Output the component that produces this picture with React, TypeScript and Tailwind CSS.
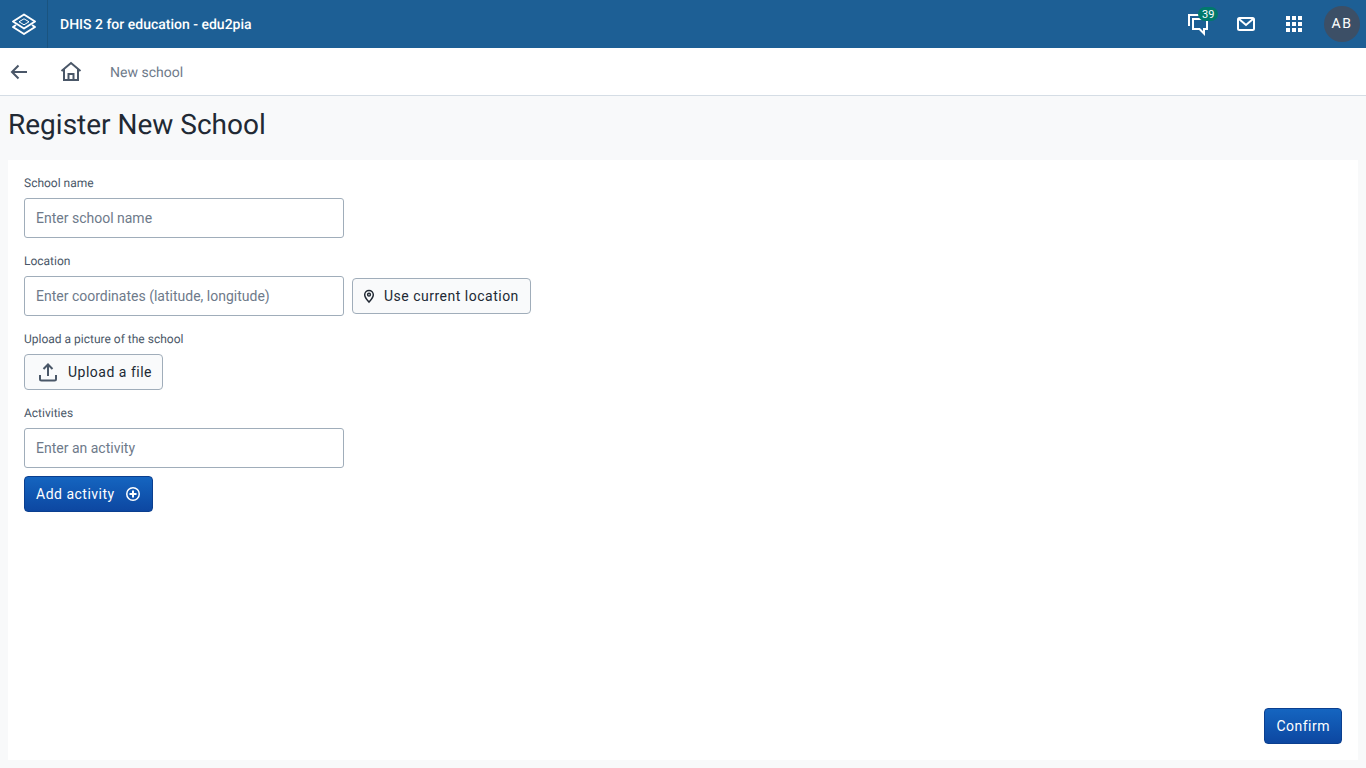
const labelClass = "block h-[14px] mb-2 text-xs leading-[14px] text-[#4a5768]";
const inputClass =
  "block w-[320px] h-10 px-[11px] rounded-[3px] border border-[#a0adba] bg-white text-sm text-[#212934] placeholder:text-[#6e7a8a] outline-none";
const secondaryClass =
  "flex items-center h-9 rounded-[4px] border border-[#a0adba] bg-[#f9fafb] text-sm font-normal tracking-[0.5px] text-[#212934]";
const primaryClass =
  "flex items-center h-9 rounded-[4px] border border-[#0b3f8f] bg-gradient-to-b from-[#1565c0] to-[#0d47a1] text-sm font-normal tracking-[0.5px] text-white";

function Logo() {
  return (
    <svg width="26" height="24" viewBox="0 0 26 24" fill="none" stroke="white" strokeWidth="2" strokeLinejoin="round">
      <path d="M13 2.5 L24 9.5 L13 16.5 L2 9.5 Z" />
      <path d="M13 6.8 L18 9.8 L13 12.8 L8 9.8 Z" strokeWidth="1" />
      <path d="M5 13 L2 15 L13 22 L24 15 L21 13" />
    </svg>
  );
}

function Messages() {
  return (
    <svg width="24" height="24" viewBox="0 0 24 24" fill="none" stroke="white" strokeWidth="2">
      <path d="M4 13 H3 V3 H16 V6" />
      <path d="M7 7 H21 V17 H18 V21.5 L13.5 17 H7 Z" />
    </svg>
  );
}

function Mail() {
  return (
    <svg width="24" height="24" viewBox="0 0 24 24" fill="none" stroke="white" strokeWidth="2">
      <rect x="4" y="6" width="16" height="12" rx="1.5" />
      <path d="M5 7 L12 13 L19 7" />
    </svg>
  );
}

function Apps() {
  const cells = [0, 1, 2, 3, 4, 5, 6, 7, 8];
  return (
    <svg width="24" height="24" viewBox="0 0 24 24" fill="white">
      {cells.map((i) => (
        <rect key={i} x={4 + (i % 3) * 6} y={4 + Math.floor(i / 3) * 6} width="4" height="4" />
      ))}
    </svg>
  );
}

function BackArrow() {
  return (
    <svg width="24" height="24" viewBox="0 0 24 24" fill="none" stroke="#4a5768" strokeWidth="2">
      <path d="M20 12 H5" />
      <path d="M11.5 5.5 L5 12 L11.5 18.5" />
    </svg>
  );
}

function Home() {
  return (
    <svg width="24" height="24" viewBox="0 0 24 24" fill="none" stroke="#4a5768" strokeWidth="2">
      <path d="M2.5 11 L12 3 L21.5 11" />
      <path d="M5 9 V20 H19 V9" />
      <path d="M9.5 20 V14 H14.5 V20" />
    </svg>
  );
}

function Pin() {
  return (
    <svg width="16" height="16" viewBox="0 0 16 16" fill="none" stroke="#212934" strokeWidth="1.5">
      <path d="M8 14 C5.8 11.5 3.7 9.5 3.7 6.7 A4.3 4.3 0 0 1 12.3 6.7 C12.3 9.5 10.2 11.5 8 14 Z" />
      <circle cx="8" cy="6.7" r="1.4" />
    </svg>
  );
}

function UploadIcon() {
  return (
    <svg width="24" height="24" viewBox="0 0 24 24" fill="none" stroke="#4a5768" strokeWidth="2">
      <path d="M12 16 V5" />
      <path d="M7.5 9 L12 4.5 L16.5 9" />
      <path d="M4 15 V19 C4 20 4.5 20.5 5.5 20.5 H18.5 C19.5 20.5 20 20 20 19 V15" />
    </svg>
  );
}

function PlusCircle() {
  return (
    <svg width="16" height="16" viewBox="0 0 16 16" fill="none" stroke="white" strokeWidth="1.5">
      <circle cx="8" cy="8" r="6.25" />
      <path d="M8 4.5 V11.5 M4.5 8 H11.5" strokeWidth="2" />
    </svg>
  );
}

export default function App() {
  return (
    <div className="flex flex-col h-[768px] bg-[#f8f9fa] overflow-hidden font-['Roboto',sans-serif] [text-rendering:geometricPrecision]">
      {/* Header */}
      <header className="flex items-center h-12 shrink-0 bg-[#1d5f95] text-white">
        <div className="flex items-center justify-center w-12 h-12 border-r border-[#1a5480]">
          <Logo />
        </div>
        <span className="ml-3 mt-px text-sm font-medium">DHIS 2 for education - edu2pia</span>
        <div className="flex items-center ml-auto">
          <button className="relative flex items-center justify-center w-12 h-12">
            <Messages />
            <span className="absolute top-[7px] left-[24px] flex items-center justify-center h-[14px] min-w-[20px] px-1 rounded-[7px] bg-[#00796b] text-[11px] leading-none text-white">
              39
            </span>
          </button>
          <button className="flex items-center justify-center w-12 h-12">
            <Mail />
          </button>
          <button className="flex items-center justify-center w-12 h-12">
            <Apps />
          </button>
          <div className="flex items-center justify-center w-9 h-9 ml-1.5 mr-1.5 rounded-full bg-[#3c4f66] text-sm tracking-[1.5px]">
            AB
          </div>
        </div>
      </header>

      {/* Breadcrumb bar */}
      <nav className="flex items-center h-12 shrink-0 bg-white border-b border-[#d5dde5]">
        <button className="flex items-center justify-center w-[38px] h-full">
          <BackArrow />
        </button>
        <div className="flex items-center justify-center w-[66px]">
          <Home />
        </div>
        <span className="ml-[6px] mt-[2px] text-sm text-[#6e7a8a]">New school</span>
      </nav>

      {/* Page */}
      <main className="flex flex-col flex-1 px-2 pb-2 min-h-0">
        <h1 className="flex items-center h-[58px] mb-[6px] shrink-0 text-[28px] font-normal text-[#212934]">
          Register New School
        </h1>
        <form className="flex flex-col flex-1 p-4 bg-white">
          <label className={labelClass}>School name</label>
          <input className={inputClass} placeholder="Enter school name" />

          <label className={`${labelClass} mt-4`}>Location</label>
          <div className="flex items-center gap-2">
            <input className={inputClass} placeholder="Enter coordinates (latitude, longitude)" />
            <button type="button" className={`${secondaryClass} gap-[7px] pl-[8px] pr-[11px]`}>
              <Pin />
              Use current location
            </button>
          </div>

          <label className={`${labelClass} mt-4`}>Upload a picture of the school</label>
          <button type="button" className={`${secondaryClass} self-start gap-2 pl-[11px] pr-[10px]`}>
            <UploadIcon />
            Upload a file
          </button>

          <label className={`${labelClass} mt-4`}>Activities</label>
          <input className={inputClass} placeholder="Enter an activity" />
          <button type="button" className={`${primaryClass} self-start gap-[10px] mt-2 pl-[11px] pr-[11px]`}>
            Add activity
            <PlusCircle />
          </button>

          <button type="button" className={`${primaryClass} self-end mt-auto px-[11px]`}>
            Confirm
          </button>
        </form>
      </main>
    </div>
  );
}
